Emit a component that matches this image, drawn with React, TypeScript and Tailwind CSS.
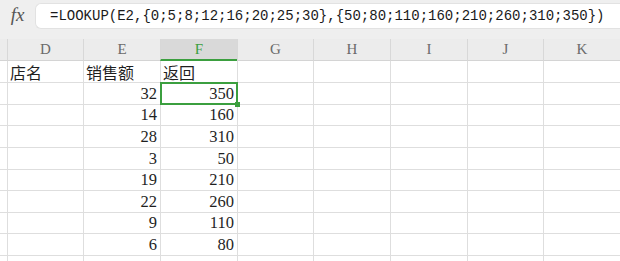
import React from 'react';

const columns = [
  { name: 'D', width: 'w-[76px]' },
  { name: 'E', width: 'w-[77px]' },
  { name: 'F', width: 'w-[77px]' },
  { name: 'G', width: 'w-[76px]' },
  { name: 'H', width: 'w-[77px]' },
  { name: 'I', width: 'w-[77px]' },
  { name: 'J', width: 'w-[76px]' },
  { name: 'K', width: 'w-[77px]' },
];

// each row: [D, E, F]
const rows: { cells: string[]; h: string }[] = [
  { cells: ['店名', '销售额', '返回'], h: 'h-[22px]' },
  { cells: ['', '32', '350'], h: 'h-[22px]' },
  { cells: ['', '14', '160'], h: 'h-[21px]' },
  { cells: ['', '28', '310'], h: 'h-[22px]' },
  { cells: ['', '3', '50'], h: 'h-[22px]' },
  { cells: ['', '19', '210'], h: 'h-[21px]' },
  { cells: ['', '22', '260'], h: 'h-[22px]' },
  { cells: ['', '9', '110'], h: 'h-[21px]' },
  { cells: ['', '6', '80'], h: 'h-[22px]' },
  { cells: ['', '', ''], h: 'h-[22px]' },
];

const formula = '=LOOKUP(E2,{0;5;8;12;16;20;25;30},{50;80;110;160;210;260;310;350})';

function Cell({ value, width, isText, selected }: { value: string; width: string; isText: boolean; selected: boolean }) {
  return (
    <div
      className={`${width} relative shrink-0 border-l border-b border-[#dedede] flex ${
        isText ? 'items-center justify-start pl-[2px]' : 'items-end justify-end pr-[3px] pb-[1px]'
      }`}
    >
      {value && (
        <span
          className={
            isText
              ? "text-[16px] leading-none text-[#1f1f1f] [font-family:'Noto_Sans_CJK_SC',sans-serif]"
              : "text-[16.5px] leading-[19px] text-[#1f1f1f] [font-family:'Liberation_Serif',serif]"
          }
        >
          {value}
        </span>
      )}
      {selected && (
        <>
          <div className="absolute z-10 -left-[1px] -top-[1px] w-[78px] h-[23px] border-2 border-[#3b9f3f]" />
          <div className="absolute z-20 -right-[3px] -bottom-[3px] w-[5px] h-[5px] bg-[#3b9f3f]" />
        </>
      )}
    </div>
  );
}

export default function App() {
  return (
    <div className="w-[620px] h-[261px] overflow-hidden bg-white">
      {/* formula bar */}
      <div className="h-[39px] bg-[#efefef] flex pt-[3px]">
        <div className="w-[35px] h-[26px] flex items-center justify-center">
          <span className="italic text-[19px] text-[#555] [font-family:'Liberation_Serif',serif] -mt-[1px]">fx</span>
        </div>
        <div className="flex-1 h-[26px] bg-white rounded-l-[6px] border border-r-0 border-[#e2e2e2] flex items-center pl-[14px]">
          <span className="text-[14px] text-[#1a1a1a] whitespace-nowrap [font-family:'Liberation_Mono',monospace]">{formula}</span>
        </div>
      </div>

      {/* column header */}
      <div className="flex h-[22px] bg-[#ececec]">
        <div className="w-[7px] shrink-0 border-b border-[#d4d4d4]" />
        {columns.map((c) => (
          <div
            key={c.name}
            className={`${c.width} shrink-0 border-l border-[#d8d8d8] flex items-center justify-center text-[15px] [font-family:'Liberation_Serif',serif] ${
              c.name === 'F' ? 'bg-[#d9d9d9] text-[#3b9f3f] border-b-2 border-b-[#3b9f3f]' : 'text-[#6a6a6a] border-b border-b-[#d4d4d4]'
            }`}
          >
            {c.name}
          </div>
        ))}
      </div>

      {/* data rows */}
      {rows.map((r, i) => (
        <div key={i} className={`flex ${r.h}`}>
          <div className="w-[7px] shrink-0 border-b border-[#dedede]" />
          {columns.map((c, ci) => (
            <Cell
              key={c.name}
              value={r.cells[ci] ?? ''}
              width={c.width}
              isText={i === 0}
              selected={i === 1 && c.name === 'F'}
            />
          ))}
        </div>
      ))}
    </div>
  );
}
